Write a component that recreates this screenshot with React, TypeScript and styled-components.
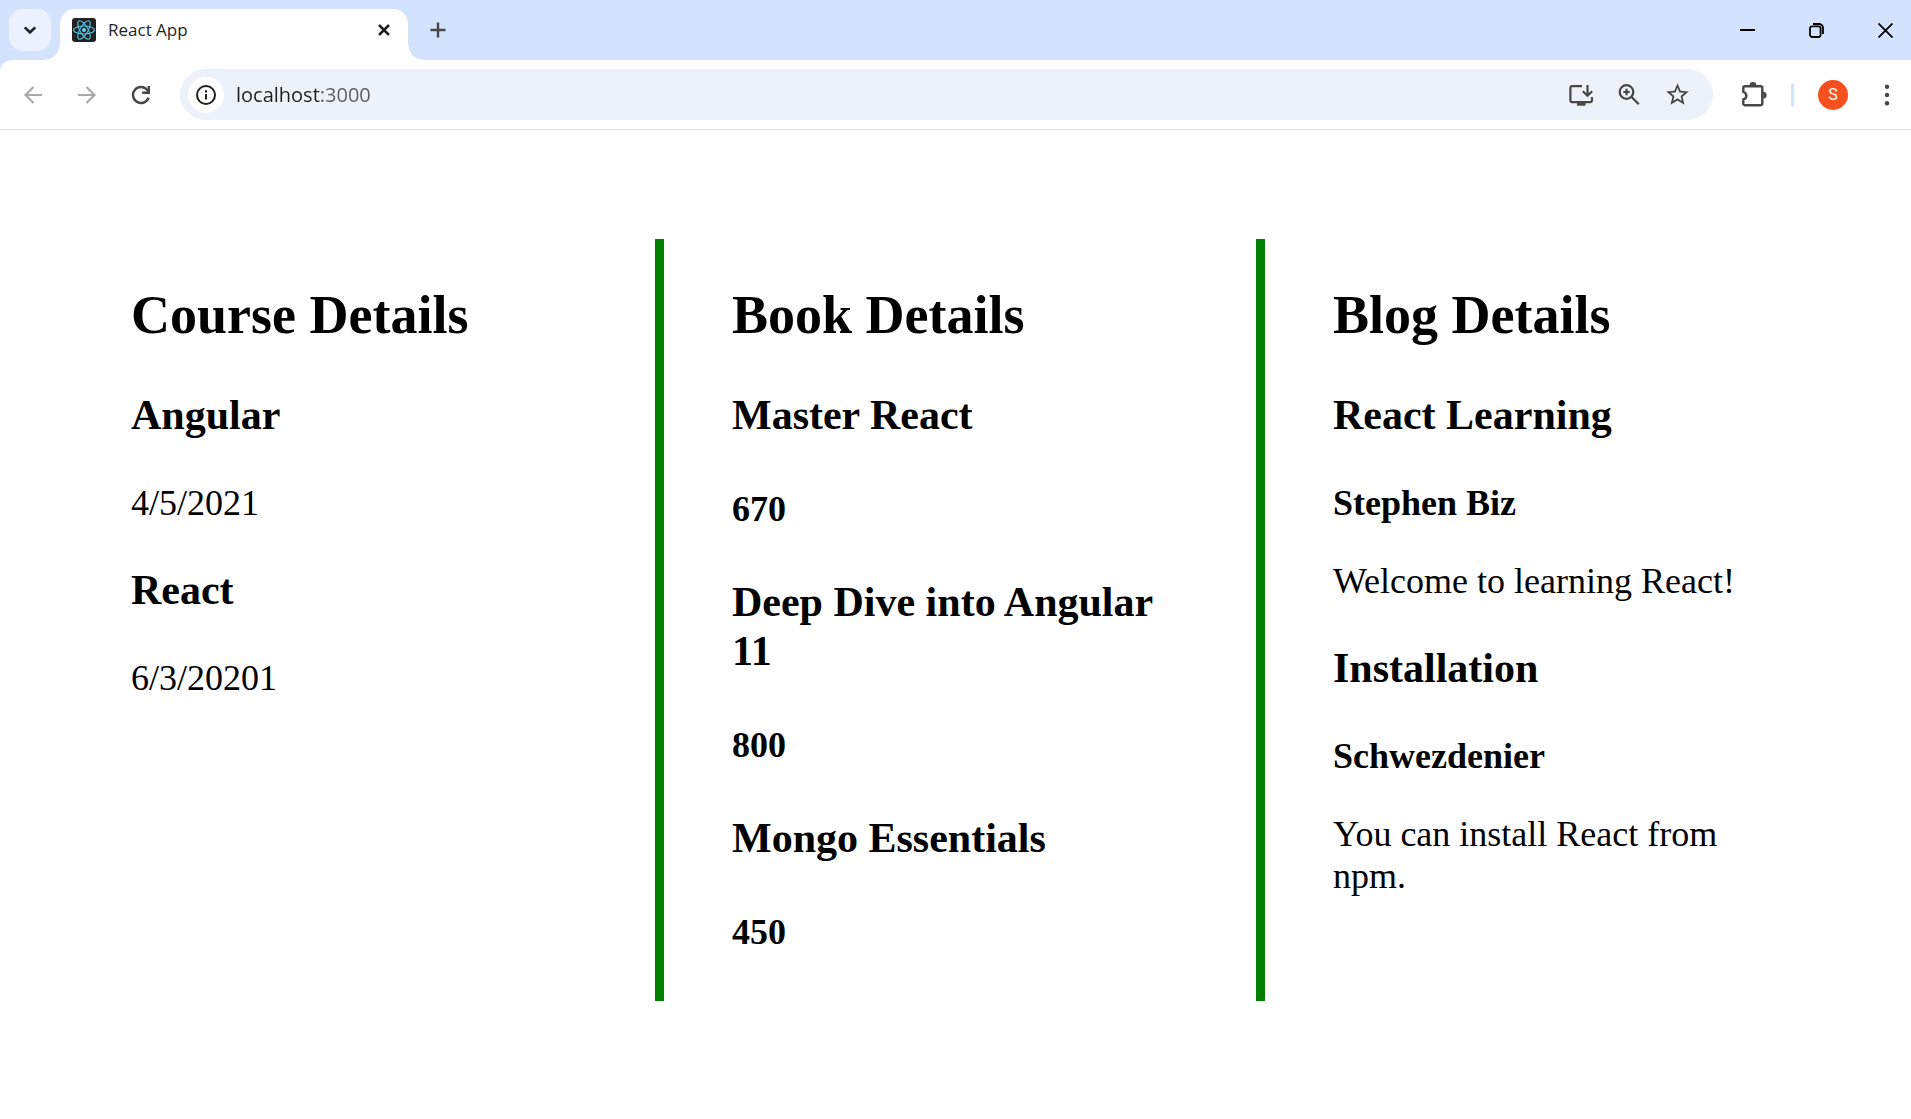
import React from "react";
import styled, { createGlobalStyle } from "styled-components";

const GlobalStyle = createGlobalStyle`
  *, *::before, *::after { box-sizing: border-box; }
  body { margin: 0; background: #ffffff; color: #000000; }
`;

const uiFont = `"Open Sans", "Noto Sans", sans-serif`;

/* ---------- browser frame ---------- */

const Frame = styled.header`
  background: #d3e3fd;
  font-family: ${uiFont};
`;

const TabStrip = styled.div`
  display: flex;
  align-items: flex-start;
  height: 60px;
  padding-left: 9px;
`;

const IconButton = styled.button<{ $size?: number; $fill?: string; $radius?: number; $color?: string }>`
  display: flex;
  flex: none;
  align-items: center;
  justify-content: center;
  width: ${(p) => p.$size ?? 42}px;
  height: ${(p) => p.$size ?? 42}px;
  padding: 0;
  border: 0;
  border-radius: ${(p) => p.$radius ?? 21}px;
  background: ${(p) => p.$fill ?? "transparent"};
  color: ${(p) => p.$color ?? "#474747"};
`;

const StripButton = styled(IconButton)`
  margin: 9px 9px 0 0;
`;

const Tab = styled.div`
  position: relative;
  display: flex;
  align-items: center;
  gap: 12px;
  width: 348px;
  height: 51px;
  margin: 9px 9px 0 0;
  padding: 0 12px 9px;
  border-radius: 15px 15px 0 0;
  background: #ffffff;

  &::before,
  &::after {
    content: "";
    position: absolute;
    bottom: 0;
    width: 15px;
    height: 15px;
  }
  &::before {
    right: 100%;
    background: radial-gradient(circle at 0 0, transparent 14px, #ffffff 15px);
  }
  &::after {
    left: 100%;
    background: radial-gradient(circle at 100% 0, transparent 14px, #ffffff 15px);
  }
`;

const TabTitle = styled.span`
  flex: 1;
  color: #1f1f1f;
  font-size: 17px;
  line-height: 24px;
`;

const WindowControls = styled.div`
  display: flex;
  gap: 18px;
  margin-left: auto;
`;

const WindowButton = styled.button`
  display: flex;
  align-items: center;
  justify-content: center;
  width: 51px;
  height: 60px;
  padding: 0;
  border: 0;
  background: transparent;
  color: #000000;
`;

const Toolbar = styled.div`
  display: flex;
  align-items: center;
  height: 70px;
  padding: 0 3px 0 12px;
  border-bottom: 1px solid #dfe1e5;
  border-radius: 12px 0 0 0;
  background: #ffffff;
`;

const NavGroup = styled.nav`
  display: flex;
  gap: 12px;
  margin-right: 18px;
`;

const AddressBar = styled.form`
  display: flex;
  flex: 1;
  align-items: center;
  gap: 12px;
  height: 51px;
  margin-right: 20px;
  padding: 0 18px 0 8px;
  border-radius: 26px;
  background: #ecf1fa;
`;

const AddressInput = styled.input`
  flex: 1;
  min-width: 0;
  padding: 0;
  border: 0;
  outline: 0;
  background: linear-gradient(90deg, #1f1f1f 85px, #5a5d61 85px);
  background-clip: text;
  -webkit-background-clip: text;
  color: transparent;
  font-family: ${uiFont};
  font-size: 20px;
  line-height: 30px;
`;

const Divider = styled.span`
  width: 3px;
  height: 24px;
  margin: 0 24px 0 16px;
  border-radius: 2px;
  background: #d3e3fd;
`;

const Avatar = styled.button`
  width: 30px;
  height: 30px;
  margin-right: 18px;
  padding: 0;
  border: 0;
  border-radius: 50%;
  background: #f4511e;
  color: #ffffff;
  font-family: Roboto, sans-serif;
  font-size: 16px;
  line-height: 30px;
`;

/* ---------- page ---------- */

const Columns = styled.main`
  display: grid;
  grid-template-columns: repeat(3, minmax(0, 1fr));
  padding: 109px 54px;
  font-family: "Liberation Serif", "Times New Roman", serif;
  font-size: 36px;
  line-height: 42px;
`;

const Column = styled.section<{ $ruled?: boolean }>`
  display: flow-root;
  padding: 0 68px;
  border-left: 9px solid ${(p) => (p.$ruled ? "#008000" : "transparent")};
`;

const ColumnTitle = styled.h1`
  margin: 45px 0 44px;
  font-size: 54px;
  line-height: 63px;
`;

const ItemTitle = styled.h2`
  margin: 42px 0;
  font-size: 42px;
  line-height: 49px;
`;

const Price = styled.h3`
  margin: 48px 0;
  font-size: 36px;
`;

const Text = styled.p<{ $strong?: boolean }>`
  margin: 36px 0;
  font-weight: ${(p) => (p.$strong ? 700 : 400)};
`;

/* ---------- icons ---------- */

type IconProps = { size: number; stroke?: number; children: React.ReactNode };

const Icon = ({ size, stroke = 2, children }: IconProps) => (
  <svg
    width={size}
    height={size}
    viewBox={`0 0 ${size} ${size}`}
    fill="none"
    stroke="currentColor"
    strokeWidth={stroke}
    aria-hidden="true"
  >
    {children}
  </svg>
);

const Favicon = () => (
  <Icon size={24} stroke={1.1}>
    <rect width="24" height="24" rx="3" fill="#222222" stroke="none" />
    <g stroke="#53c1de">
      <ellipse cx="12" cy="12" rx="10.4" ry="4" />
      <ellipse cx="12" cy="12" rx="10.4" ry="4" transform="rotate(60 12 12)" />
      <ellipse cx="12" cy="12" rx="10.4" ry="4" transform="rotate(120 12 12)" />
    </g>
    <circle cx="12" cy="12" r="2" fill="#61dafb" stroke="none" />
  </Icon>
);

const courses = [
  { name: "Angular", date: "4/5/2021" },
  { name: "React", date: "6/3/20201" },
];

const books = [
  { name: "Master React", price: 670 },
  { name: "Deep Dive into Angular 11", price: 800 },
  { name: "Mongo Essentials", price: 450 },
];

const posts = [
  { title: "React Learning", author: "Stephen Biz", body: "Welcome to learning React!" },
  { title: "Installation", author: "Schwezdenier", body: "You can install React from npm." },
];

export default function App() {
  return (
    <>
      <GlobalStyle />
      <Frame>
        <TabStrip>
          <StripButton aria-label="Search tabs" $fill="#ebf1fe" $radius={14} $color="#1f1f1f">
            <Icon size={18} stroke={2.6}>
              <path d="M3.8 6.3 9 11.5l5.2-5.2" />
            </Icon>
          </StripButton>
          <Tab>
            <Favicon />
            <TabTitle>React App</TabTitle>
            <IconButton aria-label="Close tab" $size={24} $color="#1f1f1f">
              <Icon size={12} stroke={2.5}>
                <path d="m1 1 10 10M11 1 1 11" />
              </Icon>
            </IconButton>
          </Tab>
          <StripButton aria-label="New tab">
            <Icon size={16} stroke={2.4}>
              <path d="M8 .5v15M.5 8h15" />
            </Icon>
          </StripButton>
          <WindowControls>
            <WindowButton aria-label="Minimize">
              <Icon size={15} stroke={2}>
                <path d="M0 7h15" />
              </Icon>
            </WindowButton>
            <WindowButton aria-label="Restore">
              <Icon size={15} stroke={1.8}>
                <rect x="1" y="3.400" width="10.600" height="10.600" rx="2.200" />
                <path d="M4 1h6a4 4 0 0 1 4 4v6" />
              </Icon>
            </WindowButton>
            <WindowButton aria-label="Close">
              <Icon size={15} stroke={1.8}>
                <path d="m.5.5 14 14M14.500.5.5 14.500" />
              </Icon>
            </WindowButton>
          </WindowControls>
        </TabStrip>

        <Toolbar>
          <NavGroup aria-label="History">
            <IconButton aria-label="Back" $color="#a9a9a9">
              <Icon size={18} stroke={2.2}>
                <path d="M18 9H2M9.5 1 1.5 9l8 8" />
              </Icon>
            </IconButton>
            <IconButton aria-label="Forward" $color="#a9a9a9">
              <Icon size={18} stroke={2.2}>
                <path d="M0 9h16M8.5 1l8 8-8 8" />
              </Icon>
            </IconButton>
            <IconButton aria-label="Reload">
              <Icon size={20} stroke={2.5}>
                <path d="M17.6 12.6A8 8 0 1 1 16.3 5L17.8 7.3" />
                <path d="M17.8 1v6.8H11.2" />
              </Icon>
            </IconButton>
          </NavGroup>

          <AddressBar>
            <IconButton type="button" aria-label="View site information" $size={36} $fill="#ffffff" $color="#1f1f1f">
              <Icon size={20} stroke={2}>
                <circle cx="10" cy="10" r="9" />
                <path d="M10 9v5.5M10 5.2v2.2" />
              </Icon>
            </IconButton>
            <AddressInput aria-label="Address" defaultValue="localhost:3000" />
            <IconButton type="button" aria-label="Install app" $size={36}>
              <Icon size={24} stroke={2.2}>
                <path d="M13 3.1H3.2a1.8 1.8 0 0 0-1.800 1.800v12.400a1.800 1.800 0 0 0 1.800 1.800h18a1.800 1.800 0 0 0 1.800-1.800V14" />
                <path d="M18.500 2v10M13.800 8.200l4.700 4.600 4.700-4.600" />
                <path d="M8 21h8.500" strokeWidth="3.400" />
              </Icon>
            </IconButton>
            <IconButton type="button" aria-label="Zoom" $size={36}>
              <Icon size={24} stroke={2.2}>
                <circle cx="9.500" cy="9" r="6.800" />
                <path d="m14.300 13.800 7.500 7.500M9.500 5.800v6.400M6.300 9h6.400" />
              </Icon>
            </IconButton>
            <IconButton type="button" aria-label="Bookmark this page" $size={36}>
              <svg width="27" height="27" viewBox="0 0 24 24" fill="currentColor" aria-hidden="true">
                <path d="m22 9.240-7.190-.62L12 2 9.190 8.630 2 9.240l5.460 4.730L5.820 21 12 17.270 18.180 21l-1.630-7.030L22 9.240zM12 15.400l-3.760 2.270 1-4.280-3.320-2.880 4.380-.38L12 6.100l1.710 4.040 4.380.38-3.320 2.880 1 4.280L12 15.400z" />
              </svg>
            </IconButton>
          </AddressBar>

          <IconButton aria-label="Extensions">
            <Icon size={28} stroke={2.4}>
              <path d="M4.800 5.200h16a1.500 1.500 0 0 1 1.500 1.500v16a1.500 1.500 0 0 1-1.500 1.500h-16a1.500 1.500 0 0 1-1.500-1.500v-4.200a3.900 3.900 0 0 0 0-7.600V6.700a1.500 1.500 0 0 1 1.500-1.500Z" />
              <path d="M9.600 4.400a3.400 3.400 0 0 1 6.800 0ZM23.200 10.800a3.400 3.400 0 0 1 0 6.800Z" fill="currentColor" stroke="none" />
            </Icon>
          </IconButton>
          <Divider />
          <Avatar aria-label="Profile">S</Avatar>
          <IconButton aria-label="Menu">
            <Icon size={24}>
              <g fill="currentColor" stroke="none">
                <circle cx="12" cy="3.800" r="2.200" />
                <circle cx="12" cy="12" r="2.200" />
                <circle cx="12" cy="20.200" r="2.200" />
              </g>
            </Icon>
          </IconButton>
        </Toolbar>
      </Frame>

      <Columns>
        <Column>
          <ColumnTitle>Course Details</ColumnTitle>
          {courses.map((course) => (
            <React.Fragment key={course.name}>
              <ItemTitle>{course.name}</ItemTitle>
              <Text>{course.date}</Text>
            </React.Fragment>
          ))}
        </Column>
        <Column $ruled>
          <ColumnTitle>Book Details</ColumnTitle>
          {books.map((book) => (
            <React.Fragment key={book.name}>
              <ItemTitle>{book.name}</ItemTitle>
              <Price>{book.price}</Price>
            </React.Fragment>
          ))}
        </Column>
        <Column $ruled>
          <ColumnTitle>Blog Details</ColumnTitle>
          {posts.map((post) => (
            <React.Fragment key={post.title}>
              <ItemTitle>{post.title}</ItemTitle>
              <Text $strong>{post.author}</Text>
              <Text>{post.body}</Text>
            </React.Fragment>
          ))}
        </Column>
      </Columns>
    </>
  );
}
